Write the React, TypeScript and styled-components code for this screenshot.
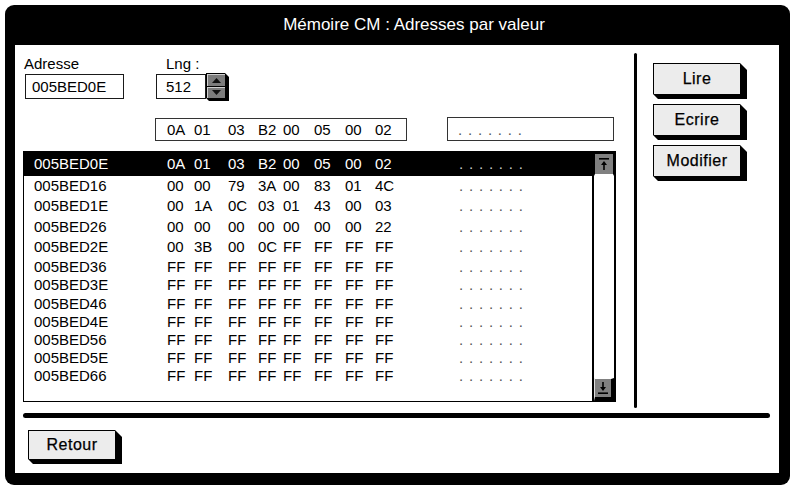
import React from "react";
import styled, { createGlobalStyle } from "styled-components";

const Global = createGlobalStyle`
  html, body { margin: 0; padding: 0; background: #fff; }
  body { font-family: "Liberation Sans", Arial, sans-serif; color: #000; }
  * { box-sizing: border-box; }
`;

const Window = styled.div`
  margin: 5px 0 0 5px;
  width: 785px;
  height: 480px;
  background: #000;
  border-radius: 9px;
  padding: 0 11px 12px 10px;
  display: flex;
  flex-direction: column;
`;

const TitleBar = styled.div`
  height: 40px;
  display: flex;
  align-items: center;
  justify-content: center;
  padding-left: 34px;
  color: #fff;
  font-size: 17px;
`;

const Body = styled.div`
  flex: 1;
  background: #fff;
  padding: 8px 9px 0 8px;
  display: flex;
  flex-direction: column;
`;

const TopArea = styled.div`
  height: 355px;
  display: flex;
`;

const LeftPane = styled.div`
  width: 611px;
  display: flex;
  flex-direction: column;
`;

const VDivider = styled.div`
  width: 3px;
  background: #000;
  border-radius: 2px;
`;

const RightPane = styled.div`
  padding: 10px 0 0 16px;
  display: flex;
  flex-direction: column;
  gap: 5px;
`;

const HDivider = styled.div`
  margin-top: 5px;
  width: 747px;
  height: 5px;
  border-radius: 3px;
  background: #000;
`;

const BottomBar = styled.div`
  padding: 12px 0 0 5px;
  display: flex;
`;

const FieldRow = styled.div`
  padding-top: 2px;
  display: flex;
  gap: 32px;
`;

const Field = styled.div<{ $labelIndent: number; $inputIndent: number }>`
  display: flex;
  flex-direction: column;
  gap: 2px;
  & > span {
    padding-left: ${(p) => p.$labelIndent}px;
  }
  & > div {
    margin-left: ${(p) => p.$inputIndent}px;
  }
`;

const Label = styled.span`
  height: 17px;
  line-height: 17px;
  font-size: 15px;
`;

const InputLine = styled.div`
  display: flex;
  align-items: flex-start;
`;

const TextBox = styled.div<{ $w: number; $pad: number }>`
  width: ${(p) => p.$w}px;
  height: 25px;
  border: 1px solid #1a1a1a;
  padding-left: ${(p) => p.$pad}px;
  font-size: 15px;
  line-height: 23px;
  background: #fff;
`;

const SpinBox = styled.div`
  width: 23px;
  height: 28px;
  margin-top: -1px;
  background: #000;
  padding: 1px 4px 3px 1px;
  display: flex;
  flex-direction: column;
  gap: 1px;
  clip-path: polygon(0 0, calc(100% - 4px) 0, 100% 4px, 100% 100%, 3px 100%, 0 calc(100% - 3px));
`;

const SpinHalf = styled.div`
  flex: 1;
  background: #7c7c7c;
  border-top: 1px solid #cfcfcf;
  border-left: 1px solid #cfcfcf;
  display: flex;
  align-items: center;
  justify-content: center;
`;

const HexRow = styled.div`
  margin-top: 17px;
  padding-left: 132px;
  display: flex;
  align-items: flex-start;
  gap: 40px;
`;

const HexGrid = styled.div`
  display: grid;
  grid-template-columns: 27px 34px 30px 25px 31px 31px 30px auto;
  align-items: center;
`;

const HexBox = styled(HexGrid)`
  width: 252px;
  height: 23px;
  border: 1px solid #333;
  padding-left: 11px;
  font-size: 15px;
`;

const AsciiBox = styled.div`
  width: 167px;
  height: 24px;
  margin-top: -1px;
  border: 1px solid #333;
  padding-left: 10px;
  display: flex;
  align-items: center;
`;

const Dots = styled.span<{ $light?: boolean }>`
  font-size: 15px;
  letter-spacing: 5.8px;
  color: ${(p) => (p.$light ? "#cfcfcf" : "#555")};
`;

const List = styled.div`
  margin-top: 10px;
  width: 593px;
  height: 251px;
  border: 1px solid #000;
  border-top: none;
  display: flex;
`;

const Rows = styled.div`
  flex: 1;
  display: flex;
  flex-direction: column;
`;

const Row = styled.div<{ $h: number; $sel?: boolean }>`
  height: ${(p) => p.$h}px;
  padding-left: 10px;
  display: grid;
  grid-template-columns: 133px 27px 34px 30px 25px 31px 31px 30px 84px 1fr;
  align-items: center;
  font-size: 15px;
  background: ${(p) => (p.$sel ? "#000" : "transparent")};
  color: ${(p) => (p.$sel ? "#fff" : "#000")};
`;

const Scrollbar = styled.div`
  width: 23px;
  border-left: 2px solid #000;
  border-right: 1px solid #000;
  display: flex;
  flex-direction: column;
  background: #fff;
`;

const UpBtn = styled.div`
  height: 25px;
  background: #808080;
  border-top: 3px solid #000;
  border-left: 1px solid #000;
  border-right: 1px solid #000;
  border-bottom: 2px solid #fff;
  display: flex;
  align-items: center;
  justify-content: center;
`;

const Track = styled.div`
  flex: 1;
`;

const DownBtn = styled.div`
  height: 23px;
  background: #808080;
  border-top: 1px solid #fff;
  border-left: 1px solid #e0e0e0;
  border-right: 3px solid #000;
  border-bottom: 4px solid #000;
  display: flex;
  align-items: center;
  justify-content: center;
`;

const Button = styled.button<{ $h: number }>`
  width: 94px;
  height: ${(p) => p.$h}px;
  padding: 0;
  background: #ececec;
  border-style: solid;
  border-color: #000;
  border-width: 1px 7px 5px 1px;
  clip-path: polygon(0 0, calc(100% - 7px) 0, 100% 7px, 100% 100%, 5px 100%, 0 calc(100% - 5px));
  font-family: "Liberation Sans", Arial, sans-serif;
  font-size: 16px;
  letter-spacing: 0.5px;
  -webkit-text-stroke: 0.25px #000;
  color: #000;
  display: flex;
  align-items: center;
  justify-content: center;
`;

const UpArrow = () => (
  <svg width="12" height="14" viewBox="0 0 12 14">
    <rect x="1" y="1" width="10" height="1.6" fill="#000" />
    <path d="M6 4 L3 8 H5.2 V13 H6.8 V8 H9 Z" fill="#000" />
  </svg>
);

const DownArrow = () => (
  <svg width="12" height="14" viewBox="0 0 12 14">
    <path d="M6 10 L3 6 H5.2 V1 H6.8 V6 H9 Z" fill="#000" />
    <rect x="1" y="11.4" width="10" height="1.6" fill="#000" />
  </svg>
);

const Tri = ({ up }: { up?: boolean }) => (
  <svg width="9" height="5" viewBox="0 0 9 5">
    <path d={up ? "M0 5 L4.5 0 L9 5 Z" : "M0 0 L4.5 5 L9 0 Z"} fill="#111" />
  </svg>
);

const ff = ["FF", "FF", "FF", "FF", "FF", "FF", "FF", "FF"];
const rows: { a: string; b: string[]; h: number }[] = [
  { a: "005BED0E", b: ["0A", "01", "03", "B2", "00", "05", "00", "02"], h: 25 },
  { a: "005BED16", b: ["00", "00", "79", "3A", "00", "83", "01", "4C"], h: 19 },
  { a: "005BED1E", b: ["00", "1A", "0C", "03", "01", "43", "00", "03"], h: 21 },
  { a: "005BED26", b: ["00", "00", "00", "00", "00", "00", "00", "22"], h: 20 },
  { a: "005BED2E", b: ["00", "3B", "00", "0C", "FF", "FF", "FF", "FF"], h: 20 },
  { a: "005BED36", b: ff, h: 20 },
  { a: "005BED3E", b: ff, h: 17 },
  { a: "005BED46", b: ff, h: 20 },
  { a: "005BED4E", b: ff, h: 17 },
  { a: "005BED56", b: ff, h: 18 },
  { a: "005BED5E", b: ff, h: 19 },
  { a: "005BED66", b: ff, h: 17 },
];

export default function App() {
  return (
    <>
      <Global />
      <Window>
        <TitleBar>Mémoire CM : Adresses par valeur</TitleBar>
        <Body>
          <TopArea>
            <LeftPane>
              <FieldRow>
                <Field $labelIndent={1} $inputIndent={2}>
                  <Label>Adresse</Label>
                  <InputLine>
                    <TextBox $w={99} $pad={6}>005BED0E</TextBox>
                  </InputLine>
                </Field>
                <Field $labelIndent={10} $inputIndent={0}>
                  <Label>Lng :</Label>
                  <InputLine>
                    <TextBox $w={50} $pad={9}>512</TextBox>
                    <SpinBox>
                      <SpinHalf>
                        <Tri up />
                      </SpinHalf>
                      <SpinHalf>
                        <Tri />
                      </SpinHalf>
                    </SpinBox>
                  </InputLine>
                </Field>
              </FieldRow>
              <HexRow>
                <HexBox>
                  {rows[0].b.map((x, i) => (
                    <span key={i}>{x}</span>
                  ))}
                </HexBox>
                <AsciiBox>
                  <Dots>.......</Dots>
                </AsciiBox>
              </HexRow>
              <List>
                <Rows>
                  {rows.map((r, i) => (
                    <Row key={r.a} $h={r.h} $sel={i === 0}>
                      <span>{r.a}</span>
                      {r.b.map((x, j) => (
                        <span key={j}>{x}</span>
                      ))}
                      <Dots $light={i === 0}>.......</Dots>
                    </Row>
                  ))}
                </Rows>
                <Scrollbar>
                  <UpBtn>
                    <UpArrow />
                  </UpBtn>
                  <Track />
                  <DownBtn>
                    <DownArrow />
                  </DownBtn>
                </Scrollbar>
              </List>
            </LeftPane>
            <VDivider />
            <RightPane>
              <Button $h={36}>Lire</Button>
              <Button $h={36}>Ecrire</Button>
              <Button $h={36}>Modifier</Button>
            </RightPane>
          </TopArea>
          <HDivider />
          <BottomBar>
            <Button $h={34}>Retour</Button>
          </BottomBar>
        </Body>
      </Window>
    </>
  );
}
